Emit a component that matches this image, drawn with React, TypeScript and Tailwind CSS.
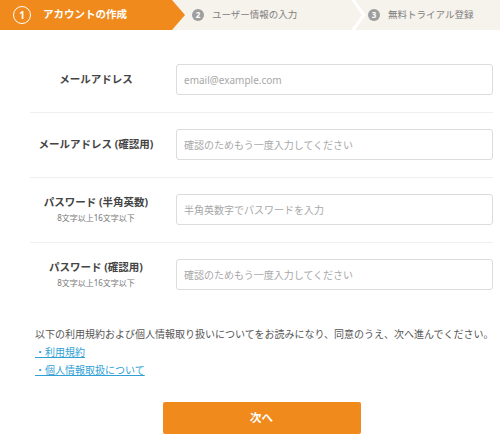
import React from "react";

const font = { fontFamily: '"Noto Sans", "Noto Sans CJK JP", sans-serif' };

function Row({ label, sub, placeholder, last }: { label: string; sub?: string; placeholder: string; last?: boolean }) {
  return (
    <div className={`flex items-center pt-4 pb-[17px] ${last ? "" : "border-b border-[#efefef]"}`}>
      <div className="w-[132px] flex flex-col items-center">
        <div className="text-[10.5px] font-bold text-[#444] leading-[15px] whitespace-nowrap">{label}</div>
        {sub && <div className="text-[8px] text-[#777] leading-[13px] mt-[1px] whitespace-nowrap">{sub}</div>}
      </div>
      <input
        className="ml-[14px] flex-1 h-[31px] border border-[#dcdcdc] rounded-[3px] px-[7px] text-[10px] text-[#333] placeholder:text-[#a8a8a8] outline-none bg-white"
        placeholder={placeholder}
        style={font}
      />
    </div>
  );
}

export default function App() {
  return (
    <div className="w-[500px] h-[439px] bg-white overflow-hidden" style={font}>
      <div className="flex h-[30px] bg-[#f6f2ec] items-center">
        <div className="h-full w-[185px] shrink-0 bg-[#f08a1c] flex items-center pl-[13px] [clip-path:polygon(0_0,172px_0,185px_50%,172px_100%,0_100%)]">
          <span className="w-[18px] h-[18px] rounded-full border-[1.5px] border-white text-white text-[10px] font-bold flex items-center justify-center leading-none">1</span>
          <span className="ml-[12px] text-white font-bold text-[10.5px] whitespace-nowrap">アカウントの作成</span>
        </div>
        <div className="w-[167px] shrink-0 flex items-center pl-[7px]">
          <span className="w-[12px] h-[12px] rounded-full bg-[#9e9e9e] text-white text-[8px] font-bold flex items-center justify-center leading-none">2</span>
          <span className="ml-[8px] text-[9.5px] text-[#808080] whitespace-nowrap">ユーザー情報の入力</span>
        </div>
        <svg width="14" height="30" viewBox="0 0 14 30" className="shrink-0">
          <polyline points="1,0 12,15 1,30" fill="none" stroke="#ffffff" strokeWidth="3" />
        </svg>
        <div className="flex items-center pl-[2px]">
          <span className="w-[12px] h-[12px] rounded-full bg-[#9e9e9e] text-white text-[8px] font-bold flex items-center justify-center leading-none">3</span>
          <span className="ml-[8px] text-[9.5px] text-[#808080] whitespace-nowrap">無料トライアル登録</span>
        </div>
      </div>

      <div className="mx-[30px] w-[463px] mt-[18px]">
        <Row label="メールアドレス" placeholder="email@example.com" />
        <Row label="メールアドレス (確認用)" placeholder="確認のためもう一度入力してください" />
        <Row label="パスワード (半角英数)" sub="8文字以上16文字以下" placeholder="半角英数字でパスワードを入力" />
        <Row label="パスワード (確認用)" sub="8文字以上16文字以下" placeholder="確認のためもう一度入力してください" last />

        <div className="mt-[18px] px-[5px] text-[10px] leading-[18px]">
          <p className="text-[#555] whitespace-nowrap">以下の利用規約および個人情報取り扱いについてをお読みになり、同意のうえ、次へ進んでください。</p>
          <p><a className="text-[#2f9fd6] underline">・利用規約</a></p>
          <p><a className="text-[#2f9fd6] underline">・個人情報取扱について</a></p>
        </div>

        <div className="flex justify-center mt-[23px]">
          <button className="w-[198px] h-[32px] bg-[#f08a1c] rounded-[2px] text-white font-bold text-[11.5px]" style={font}>次へ</button>
        </div>
      </div>
    </div>
  );
}
